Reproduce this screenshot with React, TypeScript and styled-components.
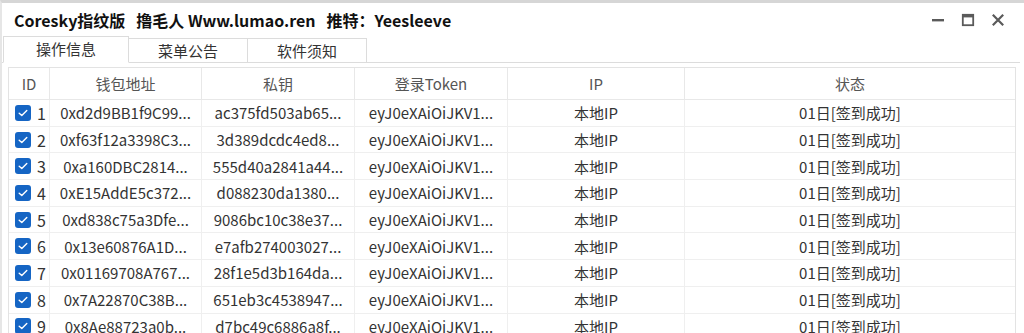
import styled, { createGlobalStyle } from 'styled-components';
import { FC } from 'react';

const GlobalStyle = createGlobalStyle`
  html, body {
    margin: 0;
    padding: 0;
    background: #ffffff;
    overflow: hidden;
  }
  body {
    font-family: "Noto Sans CJK SC", "Noto Sans", sans-serif;
    color: #333333;
  }
`;

const Window = styled.div`
  width: 1024px;
  height: 333px;
  overflow: hidden;
  box-sizing: border-box;
  border-top: 3px solid #d6d6d6;
  border-left: 2px solid #e6e6e6;
  background: #ffffff;
  display: flex;
  flex-direction: column;
`;

const TitleBar = styled.div`
  height: 33px;
  display: flex;
  align-items: center;
  justify-content: space-between;
  padding: 0 19px 0 12px;
  flex-shrink: 0;
`;

const Title = styled.div`
  font-size: 16px;
  font-weight: 700;
  color: #111111;
  white-space: pre;
`;

const Controls = styled.div`
  display: flex;
  align-items: center;
  gap: 16px;
  color: #555555;
`;

const ControlButton = styled.span`
  width: 14px;
  height: 14px;
  display: flex;
  align-items: center;
  justify-content: center;
`;

const TabStrip = styled.div`
  display: flex;
  align-items: flex-end;
  height: 26px;
  padding-left: 1px;
  border-bottom: 1px solid #dcdcdc;
  margin-right: 4px;
  flex-shrink: 0;
`;

const Tab = styled.div<{ $active?: boolean }>`
  box-sizing: border-box;
  height: ${(p) => (p.$active ? '27px' : '24px')};
  width: ${(p) => (p.$active ? '126px' : '120px')};
  margin-bottom: ${(p) => (p.$active ? '-1px' : '0')};
  margin-left: ${(p) => (p.$active ? '0' : '-1px')};
  border: 1px solid #dcdcdc;
  border-bottom: ${(p) => (p.$active ? '1px solid #ffffff' : 'none')};
  background: #ffffff;
  display: flex;
  align-items: center;
  justify-content: center;
  font-size: 15px;
  color: #333333;
  padding-bottom: ${(p) => (p.$active ? '2px' : '0')};
`;

const Pane = styled.div`
  padding: 4px 6px 0 6px;
  flex: 1;
  overflow: hidden;
`;

const Table = styled.div`
  border: 1px solid #e3e3e3;
  border-bottom: none;
  width: 1008px;
  box-sizing: border-box;
`;

const columns = '41px 152px 153px 153px 177px 1fr';

const HeaderRow = styled.div`
  display: grid;
  grid-template-columns: ${columns};
  height: 31px;
  border-bottom: 1px solid #e8e8e8;
`;

const HeaderCell = styled.div`
  display: flex;
  align-items: center;
  justify-content: center;
  font-size: 15px;
  color: #555555;
  border-right: 1px solid #e8e8e8;
  &:last-child {
    border-right: none;
  }
`;

const Row = styled.div`
  display: grid;
  grid-template-columns: ${columns};
  height: 26.7px;
  box-sizing: border-box;
  border-bottom: 1px solid #efefef;
`;

const Cell = styled.div`
  display: flex;
  align-items: center;
  justify-content: center;
  font-size: 15px;
  color: #333333;
  white-space: nowrap;
  overflow: hidden;
  border-right: 1px solid #efefef;
  &:last-child {
    border-right: none;
  }
`;

const IdCell = styled(Cell)`
  justify-content: flex-start;
  padding-left: 6px;
  gap: 6px;
  font-size: 16px;
`;

const CheckBox = styled.span`
  width: 16px;
  height: 16px;
  border-radius: 3px;
  background: #1565c4;
  display: flex;
  align-items: center;
  justify-content: center;
  flex-shrink: 0;
`;

type RowData = { id: number; wallet: string; key: string };

const rows: RowData[] = [
  { id: 1, wallet: '0xd2d9BB1f9C99...', key: 'ac375fd503ab65...' },
  { id: 2, wallet: '0xf63f12a3398C3...', key: '3d389dcdc4ed8...' },
  { id: 3, wallet: '0xa160DBC2814...', key: '555d40a2841a44...' },
  { id: 4, wallet: '0xE15AddE5c372...', key: 'd088230da1380...' },
  { id: 5, wallet: '0xd838c75a3Dfe...', key: '9086bc10c38e37...' },
  { id: 6, wallet: '0x13e60876A1D...', key: 'e7afb274003027...' },
  { id: 7, wallet: '0x01169708A767...', key: '28f1e5d3b164da...' },
  { id: 8, wallet: '0x7A22870C38B...', key: '651eb3c4538947...' },
  { id: 9, wallet: '0x8Ae88723a0b...', key: 'd7bc49c6886a8f...' },
];

const Check: FC = () => (
  <CheckBox>
    <svg width="10" height="8" viewBox="0 0 10 8">
      <path d="M1.2 4.2 L3.8 6.6 L8.8 1.4" fill="none" stroke="#ffffff" strokeWidth="1.4" strokeLinecap="round" strokeLinejoin="round" />
    </svg>
  </CheckBox>
);

export default function App() {
  return (
    <>
      <GlobalStyle />
      <Window>
        <TitleBar>
          <Title>{'Coresky指纹版   撸毛人 Www.lumao.ren   推特：Yeesleeve'}</Title>
          <Controls>
            <ControlButton>
              <svg width="14" height="14" viewBox="0 0 14 14">
                <rect x="1" y="6" width="12" height="2.4" fill="#5a5a5a" />
              </svg>
            </ControlButton>
            <ControlButton>
              <svg width="14" height="14" viewBox="0 0 14 14">
                <rect x="1.8" y="1.8" width="10.4" height="10.4" fill="none" stroke="#5a5a5a" strokeWidth="1.8" />
                <rect x="1" y="1" width="12" height="3.4" fill="#5a5a5a" />
              </svg>
            </ControlButton>
            <ControlButton>
              <svg width="14" height="14" viewBox="0 0 14 14">
                <path d="M1.8 1.8 L12.2 12.2 M12.2 1.8 L1.8 12.2" stroke="#5a5a5a" strokeWidth="2.2" />
              </svg>
            </ControlButton>
          </Controls>
        </TitleBar>
        <TabStrip>
          <Tab $active>操作信息</Tab>
          <Tab>菜单公告</Tab>
          <Tab>软件须知</Tab>
        </TabStrip>
        <Pane>
          <Table>
            <HeaderRow>
              <HeaderCell>ID</HeaderCell>
              <HeaderCell>钱包地址</HeaderCell>
              <HeaderCell>私钥</HeaderCell>
              <HeaderCell>登录Token</HeaderCell>
              <HeaderCell>IP</HeaderCell>
              <HeaderCell>状态</HeaderCell>
            </HeaderRow>
            {rows.map((r) => (
              <Row key={r.id}>
                <IdCell>
                  <Check />
                  {r.id}
                </IdCell>
                <Cell>{r.wallet}</Cell>
                <Cell>{r.key}</Cell>
                <Cell>eyJ0eXAiOiJKV1...</Cell>
                <Cell>本地IP</Cell>
                <Cell>01日[签到成功]</Cell>
              </Row>
            ))}
          </Table>
        </Pane>
      </Window>
    </>
  );
}
